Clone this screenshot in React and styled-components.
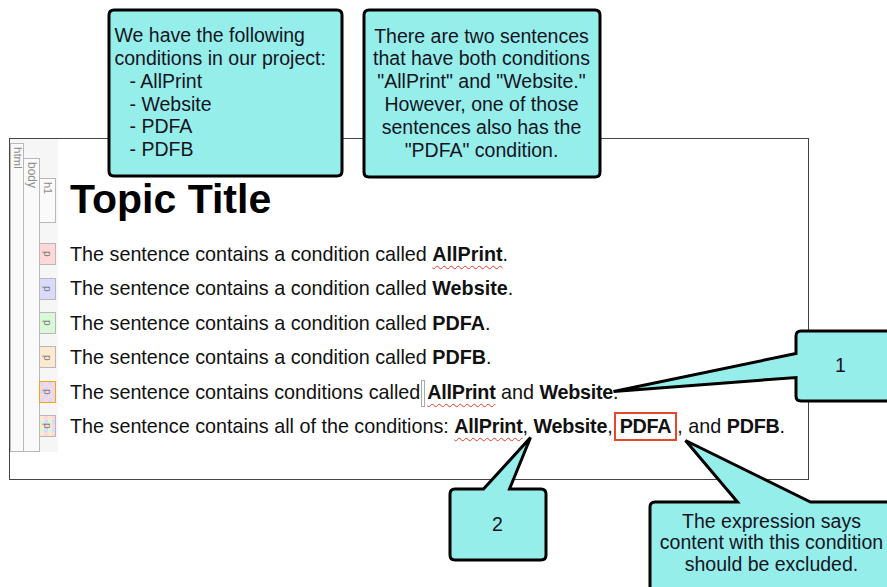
import React from "react";
import styled, { createGlobalStyle } from "styled-components";

const GlobalStyle = createGlobalStyle`
  html, body {
    margin: 0;
    padding: 0;
    background: #fff;
    overflow: hidden;
  }
  body {
    font-family: "Liberation Sans", Arial, sans-serif;
  }
`;

const Page = styled.div`
  position: relative;
  width: 887px;
  height: 587px;
  overflow: hidden;
  box-sizing: border-box;
  padding: 138px 0 0 9px;
`;

const Editor = styled.div`
  width: 800px;
  height: 342px;
  box-sizing: border-box;
  border: 1px solid #444;
  display: grid;
  grid-template-columns: 14px 16px 18px 1fr;
  grid-template-rows: 98px repeat(6, 34.4px) 9px;
  align-content: start;
`;

const GutterBg = styled.div`
  grid-column: 1 / 4;
  grid-row: 1 / -1;
  background: #f6f6f6;
`;

const TagBar = styled.div`
  grid-column: ${p => p.$col};
  grid-row: 1 / -1;
  margin-top: ${p => p.$top}px;
  box-sizing: border-box;
  border: 1px solid #b8b8b8;
  border-left: ${p => (p.$first ? "1px solid #b8b8b8" : "none")};
  background: #fafafa;
  display: flex;
  justify-content: center;
`;

const TagLabel = styled.span`
  writing-mode: vertical-rl;
  font-size: ${p => p.$size || 12}px;
  line-height: 1;
  color: #8c8c8c;
  padding-top: 3px;
`;

const H1Tag = styled.div`
  grid-column: 3;
  grid-row: 1;
  align-self: start;
  margin-top: 39px;
  width: 16px;
  height: 45px;
  box-sizing: border-box;
  border: 1px solid #b8b8b8;
  border-left: none;
  background: #fafafa;
  display: flex;
  justify-content: center;
`;

const PTag = styled.div`
  grid-column: 3;
  grid-row: ${p => p.$row};
  align-self: center;
  margin-left: -1px;
  width: 17px;
  height: 22px;
  box-sizing: border-box;
  border: 1px solid ${p => p.$border || "#b8b8b8"};
  background: ${p => p.$bg};
  background-size: 8px 8px;
  display: flex;
  align-items: center;
  justify-content: center;
  writing-mode: vertical-rl;
  font-size: 10px;
  color: #777;
`;

const Title = styled.h1`
  grid-column: 4;
  grid-row: 1;
  align-self: start;
  margin: 37px 0 0;
  padding-left: 12px;
  font-size: 41px;
  line-height: 46px;
  font-weight: bold;
  color: #000;
`;

const Row = styled.p`
  grid-column: 4;
  grid-row: ${p => p.$row};
  margin: 0;
  padding-left: 12px;
  font-size: 19.75px;
  line-height: 34.4px;
  color: #111;
  white-space: nowrap;

  b {
    letter-spacing: ${p => (p.$tight ? "-0.25px" : "0")};
  }
`;

const Spell = styled.b`
  text-decoration: underline wavy #e5392b;
  text-decoration-thickness: 1px;
  text-underline-offset: 4px;
`;

const Bracket = styled.span`
  display: inline-block;
  width: 4px;
  height: 27px;
  margin: 0 2px 0 1px;
  box-sizing: border-box;
  border: 1px solid #aaa;
  vertical-align: middle;
`;

const Highlight = styled.b`
  display: inline-block;
  margin-left: 1px;
  border: 2px solid #e4472a;
  padding: 0 4px;
  line-height: 25px;
`;

const CalloutWrap = styled.div`
  position: absolute;
  left: ${p => p.$x}px;
  top: ${p => p.$y}px;
  width: ${p => p.$w}px;
  height: ${p => p.$h}px;
`;

const CalloutShape = styled.svg`
  position: absolute;
  left: 0;
  top: 0;
  overflow: visible;
`;

const CalloutText = styled.div`
  position: relative;
  box-sizing: border-box;
  height: 100%;
  display: flex;
  flex-direction: column;
  justify-content: ${p => (p.$top ? "flex-start" : "center")};
  align-items: ${p => (p.$left ? "flex-start" : "center")};
  text-align: ${p => (p.$left ? "left" : "center")};
  padding: ${p => p.$pad || "0"};
  font-size: 19.5px;
  line-height: ${p => p.$lh || 22.8}px;
  color: #14141e;
  white-space: nowrap;
`;

const Indent = styled.div`
  padding-left: 15px;
`;

const shapePath = (w, h, r, ptr) => {
  const d = [`M ${r} 0`];
  if (ptr && ptr.side === "top") d.push(`H ${ptr.a} L ${ptr.tx} ${ptr.ty} L ${ptr.b} 0`);
  d.push(`H ${w - r} Q ${w} 0 ${w} ${r} V ${h - r} Q ${w} ${h} ${w - r} ${h} H ${r} Q 0 ${h} 0 ${h - r}`);
  if (ptr && ptr.side === "left") d.push(`V ${ptr.b} L ${ptr.tx} ${ptr.ty} L 0 ${ptr.a}`);
  d.push(`V ${r} Q 0 0 ${r} 0 Z`);
  return d.join(" ");
};

const Callout = ({ x, y, w, h, ptr, children, ...rest }) => (
  <CalloutWrap $x={x} $y={y} $w={w} $h={h}>
    <CalloutShape width={w} height={h}>
      <path d={shapePath(w, h, 5, ptr)} fill="#96eeeb" stroke="#000" strokeWidth="3" />
    </CalloutShape>
    <CalloutText {...rest}>{children}</CalloutText>
  </CalloutWrap>
);

const pFills = [
  { bg: "#fcd8d8" },
  { bg: "#dadafc" },
  { bg: "#d8f8d8" },
  { bg: "#fde9cf" },
  { bg: "repeating-conic-gradient(#fcd8d8 0 25%, #dadafc 0 50%)", border: "#f5a31a" },
  { bg: "conic-gradient(#fcd8d8 0 25%, #dadafc 0 50%, #d8f8d8 0 75%, #fde9cf 0)" }
];

const App = () => (
  <Page>
    <GlobalStyle />
    <Editor>
      <GutterBg />
      <TagBar $col={1} $top={4} $first>
        <TagLabel $size={11.5}>html</TagLabel>
      </TagBar>
      <TagBar $col={2} $top={19}>
        <TagLabel $size={12}>body</TagLabel>
      </TagBar>
      <H1Tag>
        <TagLabel $size={11}>h1</TagLabel>
      </H1Tag>
      {pFills.map((f, i) => (
        <PTag key={i} $row={i + 2} $bg={f.bg} $border={f.border}>p</PTag>
      ))}

      <Title>Topic Title</Title>
      <Row $row={2}>
        The sentence contains a condition called <Spell>AllPrint</Spell>.
      </Row>
      <Row $row={3}>
        The sentence contains a condition called <b>Website</b>.
      </Row>
      <Row $row={4}>
        The sentence contains a condition called <b>PDFA</b>.
      </Row>
      <Row $row={5}>
        The sentence contains a condition called <b>PDFB</b>.
      </Row>
      <Row $row={6} $tight>
        The sentence contains conditions called<Bracket />
        <Spell>AllPrint</Spell> and <b>Website</b>.
      </Row>
      <Row $row={7} $tight>
        The sentence contains all of the conditions: <Spell>AllPrint</Spell>,{" "}
        <b>Website</b>,<Highlight>PDFA</Highlight>, and <b>PDFB</b>.
      </Row>
    </Editor>

    <Callout x={108.5} y={9.5} w={233} h={166} $left $pad="0 0 0 6px">
      <div>We have the following</div>
      <div>conditions in our project:</div>
      <Indent>- AllPrint</Indent>
      <Indent>- Website</Indent>
      <Indent>- PDFA</Indent>
      <Indent>- PDFB</Indent>
    </Callout>

    <Callout x={363.5} y={9.5} w={236} h={167}>
      <div>There are two sentences</div>
      <div>that have both conditions</div>
      <div>"AllPrint" and "Website."</div>
      <div>However, one of those</div>
      <div>sentences also has the</div>
      <div>"PDFA" condition.</div>
    </Callout>

    <Callout
      x={795.5}
      y={330.5}
      w={110}
      h={70}
      ptr={{ side: "left", a: 22.5, b: 46.5, tx: -182.5, ty: 60.5 }}
      $pad="0 20px 0 0"
    >
      1
    </Callout>

    <Callout
      x={449.5}
      y={488.5}
      w={96}
      h={71}
      ptr={{ side: "top", a: 33.5, b: 59.5, tx: 80.5, ty: -51.5 }}
    >
      2
    </Callout>

    <Callout
      x={649.5}
      y={501.5}
      w={244}
      h={110}
      ptr={{ side: "top", a: 87.5, b: 160.5, tx: 35.5, ty: -61.5 }}
      $top
      $lh={21.7}
      $pad="9px 0 0 0"
    >
      <div>The expression says</div>
      <div>content with this condition</div>
      <div>should be excluded.</div>
    </Callout>
  </Page>
);

export default App;
